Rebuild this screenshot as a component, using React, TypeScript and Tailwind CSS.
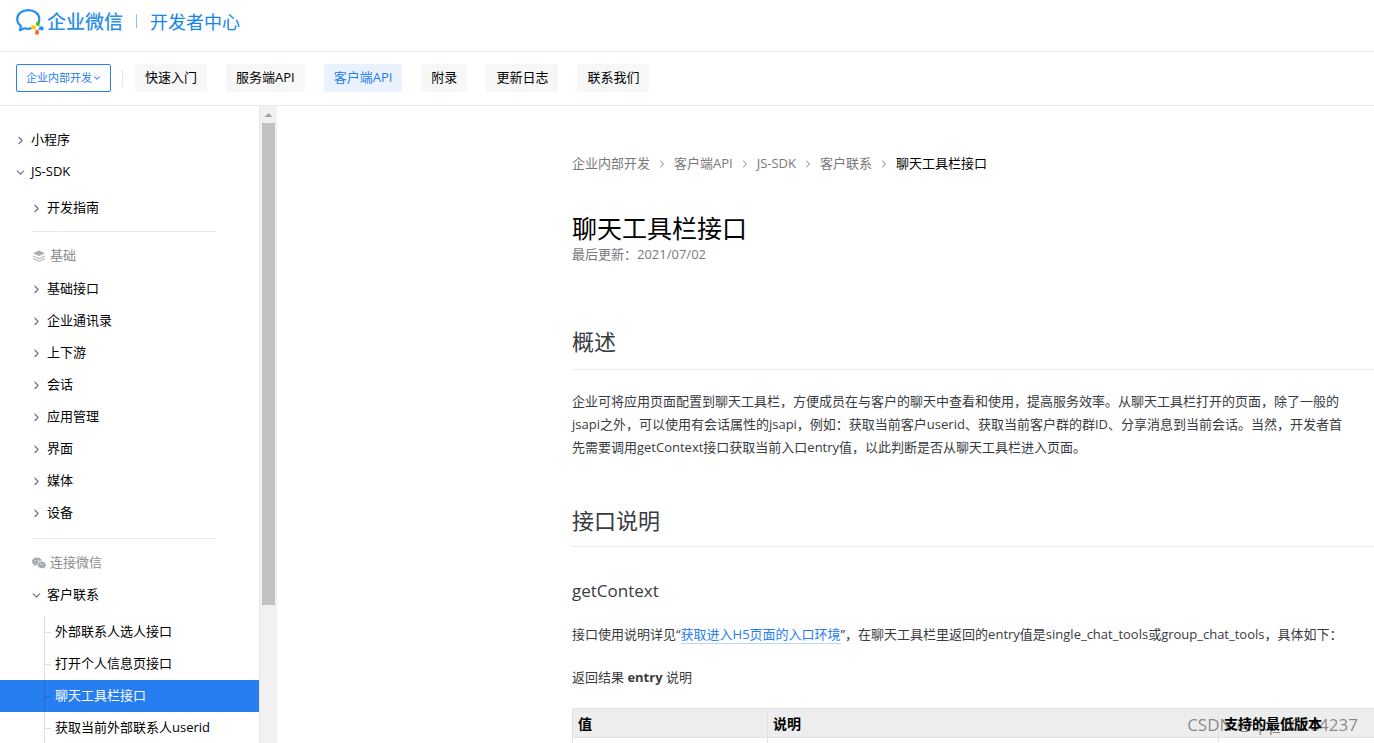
import { ChevronDown, ChevronRight } from "lucide-react";
import { Fragment } from "react";

const tabs = ["快速入门", "服务端API", "客户端API", "附录", "更新日志", "联系我们"];
const activeTab = "客户端API";

const basics = ["基础接口", "企业通讯录", "上下游", "会话", "应用管理", "界面", "媒体", "设备"];

const contactPages = [
  "外部联系人选人接口",
  "打开个人信息页接口",
  "聊天工具栏接口",
  "获取当前外部联系人userid",
];
const activePage = "聊天工具栏接口";

const crumbs = ["企业内部开发", "客户端API", "JS-SDK", "客户联系"];

function Logo() {
  return (
    <svg width="28" height="28" viewBox="0 0 28 28" fill="none">
      <path
        d="M22.600 14.200C23.100 13.200 23.300 12.200 23.300 11.100C23.300 5.700 18.300 2.200 12.200 2.200C6.100 2.200 1.200 5.900 1.200 11.100C1.200 14 2.600 16.400 4.900 18.100L4 22.200L8.300 20.300C10.500 20.900 12.800 20.900 14.800 20.400"
        stroke="#2490f0"
        strokeWidth="2.200"
        strokeLinecap="round"
        strokeLinejoin="round"
      />
      <path d="M22 13.200c1.900 0 2.500 2 1.600 3.200-.5.700-.2 1.400.6 2.400-1.500-.5-2.600-.7-3.400-1.300-1.700-1.200-.8-4.300 1.200-4.300z" fill="#4cc03a" />
      <path d="M27.700 20.400c0 1.900-2 2.500-3.200 1.600-.7-.5-1.400-.2-2.400.6.5-1.500.7-2.600 1.300-3.400 1.200-1.700 4.300-.8 4.300 1.200z" fill="#2490f0" />
      <path d="M21 26.800c-1.900 0-2.500-2-1.600-3.200.5-.7.2-1.400-.6-2.400 1.500.5 2.600.7 3.400 1.300 1.700 1.200.8 4.300-1.200 4.300z" fill="#fb6a22" />
      <path d="M15 19.200c0-1.900 2-2.500 3.200-1.600.7.5 1.400.2 2.400-.6-.5 1.500-.7 2.600-1.300 3.400-1.200 1.700-4.300.8-4.300-1.200z" fill="#fdc500" />
    </svg>
  );
}

function LayersIcon() {
  return (
    <svg width="14" height="12" viewBox="0 0 14 12" fill="none">
      <path d="M7 0.500L13 3.300L7 6.100L1 3.300Z" fill="#a9acb0" />
      <path d="M1 5.900L7 8.700L13 5.900M1 8.500L7 11.300L13 8.500" stroke="#a9acb0" />
    </svg>
  );
}

function WechatIcon() {
  return (
    <svg width="14" height="12" viewBox="0 0 14 12">
      <path d="M5 0.500C2.200 0.500 0 2.300 0 4.600c0 1.300.7 2.400 1.800 3.100L1.400 9.200l1.700-.9c.6.200 1.200.3 1.900.3h.3C4.900 5.900 7.100 3.800 9.900 3.800 9.500 1.900 7.500.5 5 .5z" fill="#a9acb0" />
      <path d="M9.900 4.600c-2.300 0-4.100 1.500-4.100 3.300s1.800 3.300 4.100 3.300c.5 0 1-.1 1.500-.2l1.400.7-.4-1.200c1-.6 1.600-1.500 1.600-2.600 0-1.800-1.800-3.300-4.100-3.300z" fill="#a9acb0" />
      <g fill="#fff">
        <circle cx="3.400" cy="3.500" r="0.600" />
        <circle cx="6.600" cy="3.500" r="0.600" />
        <circle cx="8.600" cy="7" r="0.500" />
        <circle cx="11.200" cy="7" r="0.500" />
      </g>
    </svg>
  );
}

function TreeItem({ label, open = false }: { label: string; open?: boolean }) {
  const Icon = open ? ChevronDown : ChevronRight;
  return (
    <button className="flex h-8 w-full items-center gap-1 text-left">
      <Icon size={13} strokeWidth={2} className="text-[#6b6f76]" />
      {label}
    </button>
  );
}

function Header() {
  return (
    <header className="flex h-[52px] shrink-0 items-start border-b border-[#e9e9e9] px-4 pt-2">
      <a href="#" className="flex items-center gap-[3px]">
        <Logo />
        <span className="text-[19px] leading-7 font-medium text-[#2d8fe8]">企业微信</span>
      </a>
      <span className="mx-[13px] mt-[6px] h-[14px] w-px bg-[#8dc1f5]" />
      <a href="#" className="text-[18px] leading-7 text-[#1485ee]">
        开发者中心
      </a>
    </header>
  );
}

function NavBar() {
  return (
    <nav className="flex h-[54px] shrink-0 items-center border-b border-[#e9e9e9] px-4 pb-px">
      <div className="relative">
        <select
          aria-label="企业内部开发"
          className="block h-7 w-[95px] appearance-none rounded-[2px] border border-[#267ef0] bg-white pl-[9px] text-[11px] text-[#267ef0]"
        >
          <option>企业内部开发</option>
        </select>
        <ChevronDown size={10} strokeWidth={2.5} className="pointer-events-none absolute top-[9px] right-[9px] text-[#267ef0]" />
      </div>
      <span className="mr-3 ml-[11px] h-[17px] w-px bg-[#e4e4e4]" />
      <div className="flex gap-[19px]">
        {tabs.map((tab) => (
          <button
            key={tab}
            className={`h-7 rounded-[2px] px-[10px] ${
              tab === activeTab ? "bg-[#e9f2fe] text-[#267ef0]" : "bg-[#f7f7f7]"
            }`}
          >
            {tab}
          </button>
        ))}
      </div>
    </nav>
  );
}

function Sidebar() {
  return (
    <aside className="flex w-[277px] shrink-0 overflow-hidden">
      <div className="flex-1 pt-[18px]">
        <div className="pl-[14px]">
          <TreeItem label="小程序" />
          <TreeItem label="JS-SDK" open />
        </div>
        <div className="mt-1 pl-[30px]">
          <TreeItem label="开发指南" />
          <hr className="mt-[7px] mr-[43px] mb-2 ml-[2px] border-[#e9e9e9]" />
          <h6 className="flex h-8 items-center gap-1 pl-[2px] text-[#8a8a8a]">
            <LayersIcon />
            基础
          </h6>
          <div className="pt-px pb-[2px]">
            {basics.map((label) => (
              <TreeItem key={label} label={label} />
            ))}
          </div>
          <hr className="mt-[7px] mr-[43px] mb-2 ml-[2px] border-[#e9e9e9]" />
          <h6 className="flex h-8 items-center gap-1 pl-[2px] text-[#8a8a8a]">
            <WechatIcon />
            连接微信
          </h6>
          <TreeItem label="客户联系" open />
        </div>
        <ul className="mt-[5px]">
          {contactPages.map((page) => (
            <li key={page} className={page === activePage ? "bg-[#267ef0] text-white" : ""}>
              <a href="#" className="ml-11 flex h-8 items-center gap-1 border-l border-black/12">
                <span className="h-px w-[6px] bg-black/12" />
                {page}
              </a>
            </li>
          ))}
        </ul>
      </div>
      <div className="flex w-[18px] flex-col items-center border-l border-[#e9e9e9] bg-[#f1f1f1]">
        <svg width="17" height="17" viewBox="0 0 17 17" className="shrink-0">
          <path d="M4.500 11L8.500 7L12.500 11Z" fill="#a3a3a3" />
        </svg>
        <div className="h-[482px] w-[13px] shrink-0 bg-[#c1c1c1]" />
      </div>
    </aside>
  );
}

function Article() {
  return (
    <main className="min-w-0 flex-1 overflow-hidden pt-[46px] pl-[295px] text-[#383b40]">
      <div className="flex h-6 items-center gap-[6px] text-[#787878]">
        {crumbs.map((crumb) => (
          <Fragment key={crumb}>
            <a href="#">{crumb}</a>
            <ChevronRight size={12} strokeWidth={2} />
          </Fragment>
        ))}
        <span className="text-black">聊天工具栏接口</span>
      </div>

      <h1 className="mt-9 text-[25px] leading-8 text-black">聊天工具栏接口</h1>
      <p className="leading-5 text-[#787878]">最后更新：2021/07/02</p>

      <h2 className="mt-[59px] border-b border-[#ececec] pb-[10px] text-[22px] leading-9">概述</h2>
      <p className="mt-5 pr-7 leading-[23px]">
        企业可将应用页面配置到聊天工具栏，方便成员在与客户的聊天中查看和使用，提高服务效率。从聊天工具栏打开的页面，除了一般的jsapi之外，可以使用有会话属性的jsapi，例如：获取当前客户userid、获取当前客户群的群ID、分享消息到当前会话。当然，开发者首先需要调用getContext接口获取当前入口entry值，以此判断是否从聊天工具栏进入页面。
      </p>

      <h2 className="mt-[43px] border-b border-[#ececec] pb-2 text-[22px] leading-9">接口说明</h2>
      <h3 className="mt-8 text-[17px] leading-6">getContext</h3>
      <p className="mt-5 leading-[23px] whitespace-nowrap">
        接口使用说明详见“
        <a href="#" className="border-b border-[#b9d6fb] text-[#267ef0]">
          获取进入H5页面的入口环境
        </a>
        ”，在聊天工具栏里返回的entry值是single_chat_tools或group_chat_tools，具体如下：
      </p>
      <p className="mt-5 leading-[23px]">
        返回结果 <strong>entry</strong> 说明
      </p>

      <table className="mt-[19px] w-full table-fixed border-collapse text-[14px] text-black">
        <thead>
          <tr className="bg-[#ededed] text-left">
            <th className="h-[29px] w-[195px] border border-[#dfe2ec] px-[5px]">值</th>
            <th className="w-[451px] border border-[#dfe2ec] px-[5px]">说明</th>
            <th className="border border-r-0 border-[#dfe2ec] px-[5px]">支持的最低版本</th>
          </tr>
        </thead>
        <tbody>
          <tr>
            <td className="h-8 border border-[#dfe2ec]" />
            <td className="border border-[#dfe2ec]" />
            <td className="border border-r-0 border-[#dfe2ec]" />
          </tr>
        </tbody>
      </table>
    </main>
  );
}

export default function App() {
  return (
    <div className="relative flex h-screen flex-col overflow-hidden bg-white font-['Open_Sans','Noto_Sans_CJK_SC',sans-serif] text-[13px] text-black">
      <Header />
      <NavBar />
      <div className="flex min-h-0 flex-1">
        <Sidebar />
        <Article />
      </div>
      <span className="pointer-events-none absolute right-4 bottom-2 text-[17px] leading-5 text-black/45">
        CSDN @qq_26264237
      </span>
    </div>
  );
}
